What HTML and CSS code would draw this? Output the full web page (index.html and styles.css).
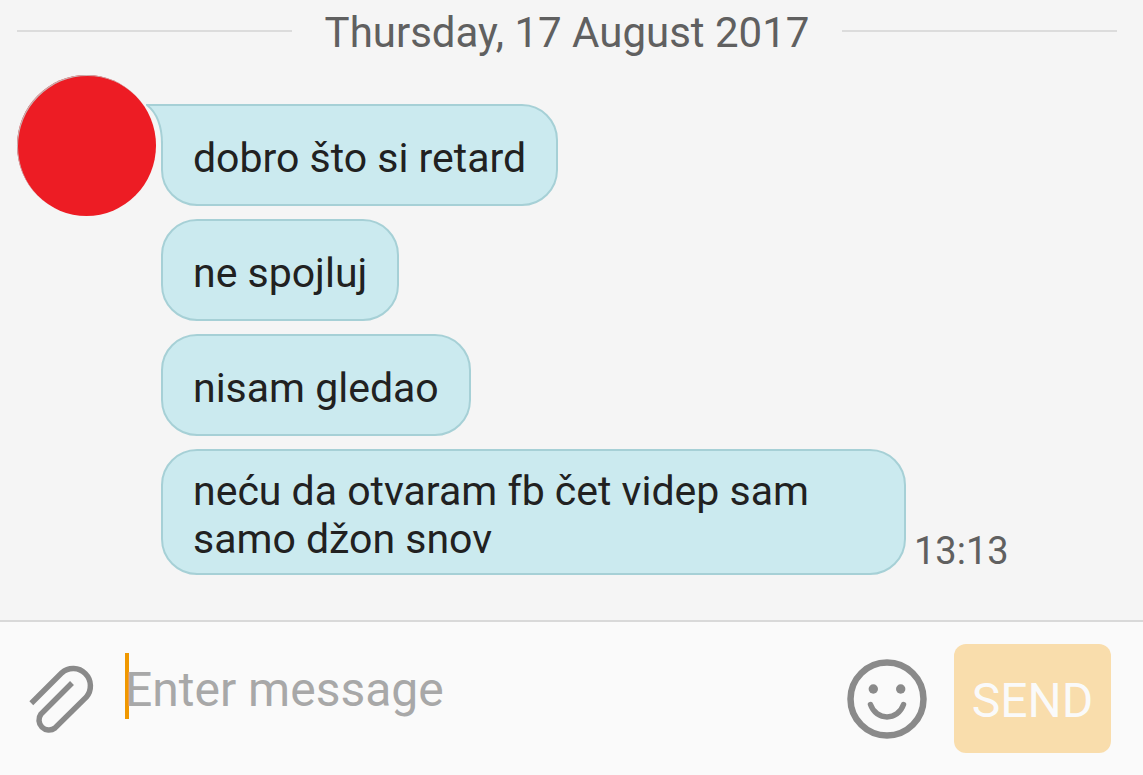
FILE: index.html
```html
<!DOCTYPE html>
<html lang="sr-Latn">

<head>
    <meta charset="UTF-8">
    <meta name="viewport" content="width=device-width, initial-scale=1.0">
    <title>Messages</title>
    <link rel="stylesheet" href="styles.css">
</head>

<body>
    <main class="conversation">
        <h1 class="date">Thursday, 17 August 2017</h1>

        <section class="thread">
            <div class="avatar"></div>
            <div class="messages">
                <div class="message first">
                    <svg class="tail" viewBox="0 0 20 40" aria-hidden="true">
                        <path class="tail-fill" d="M1 1 Q16 13 16 37 L20 40 V1 Z" />
                        <path class="tail-line" d="M20 1 H1 Q16 13 16 40" />
                    </svg>
                    <p class="bubble">dobro što si retard</p>
                </div>
                <div class="message">
                    <p class="bubble">ne spojluj</p>
                </div>
                <div class="message">
                    <p class="bubble">nisam gledao</p>
                </div>
                <div class="message">
                    <p class="bubble">neću da otvaram fb čet videp sam samo džon snov</p>
                    <time class="time">13:13</time>
                </div>
            </div>
        </section>
    </main>

    <form class="composer">
        <button type="button" class="icon-button" aria-label="Attach">
            <svg class="clip" viewBox="0 0 66 70">
                <path d="M2.300 39.300 L32.800 8.800 A17.300 17.300 0 0 1 57.200 33.200 L26 64 A10 10 0 0 1 12 50 L43 19" />
            </svg>
        </button>
        <input type="text" class="message-input" placeholder="Enter message" aria-label="Enter message">
        <button type="button" class="icon-button" aria-label="Emoji">
            <svg class="smiley" viewBox="0 0 80 80">
                <circle class="face" cx="40" cy="40" r="36.5" />
                <circle class="eye" cx="26.3" cy="30" r="4.7" />
                <circle class="eye" cx="53.7" cy="30" r="4.7" />
                <path class="mouth" d="M23.500 45.500 C29 62 51 62 56.500 45.500" />
            </svg>
        </button>
        <button type="button" class="send">SEND</button>
    </form>
</body>

</html>
```
FILE: styles.css
```css
* {
    box-sizing: border-box;
}

body {
    font-family: Roboto, sans-serif;
    margin: 0;
    min-height: 100vh;
    display: flex;
    flex-direction: column;
    background-color: #f5f5f5;
}

.conversation {
    flex: 1;
    padding: 9px 26px 44px 17px;
}

.date {
    display: flex;
    align-items: center;
    gap: 33px;
    margin: 0;
    font-size: 42px;
    line-height: 48px;
    font-weight: 400;
    color: #606060;
}

.date::before,
.date::after {
    content: "";
    flex: 1;
    height: 2px;
    margin-bottom: 4px;
    background-color: #dcdcdc;
}

.thread {
    display: flex;
    margin-top: 18px;
}

.avatar {
    flex: none;
    width: 139px;
    height: 141px;
    margin-right: 5px;
    border-radius: 50%;
    background-color: #ed1c24;
    box-shadow: inset 1px 1px 0 #c9b4b4;
}

.messages {
    flex: 1;
    display: flex;
    flex-direction: column;
    gap: 13px;
    padding-top: 29px;
}

.message {
    position: relative;
    display: flex;
    align-items: flex-end;
    gap: 8px;
}

.bubble {
    display: flex;
    align-items: center;
    max-width: 745px;
    min-height: 102px;
    margin: 0;
    padding: 16px 30px 10px;
    border: 2px solid #a6d0d6;
    border-radius: 36px;
    background-color: #cbeaef;
    color: #212121;
    font-size: 41px;
    line-height: 48px;
}

.first .bubble {
    border-top-left-radius: 0;
}

/* piece of the bubble that reaches behind the avatar */
.tail {
    position: absolute;
    top: 0;
    left: -15px;
    width: 20px;
    height: 40px;
}

.tail-fill {
    fill: #cbeaef;
}

.tail-line {
    fill: none;
    stroke: #a6d0d6;
    stroke-width: 2;
}

.time {
    color: #606060;
    font-size: 38px;
    line-height: 48px;
}

.composer {
    display: flex;
    align-items: center;
    padding: 22px 32px 22px 29px;
    border-top: 2px solid #d9d9d9;
    background-color: #fafafa;
}

.icon-button {
    flex: none;
    padding: 0;
    border: none;
    background: none;
    cursor: pointer;
}

.icon-button svg {
    display: block;
    fill: none;
    stroke: #8a8a8a;
}

.icon-button .clip {
    width: 66px;
    height: 70px;
    stroke-width: 5.5;
}

.icon-button .smiley {
    width: 80px;
    height: 80px;
    stroke-width: 6.5;
}

.smiley .eye {
    fill: #8a8a8a;
    stroke: none;
}

.smiley .mouth {
    stroke-width: 5.5;
    stroke-linecap: round;
}

/* the orange bar is the text cursor */
.message-input {
    flex: 1;
    align-self: flex-start;
    min-width: 0;
    height: 66px;
    margin: 9px 30px 0;
    padding: 6px 0 0;
    border: none;
    outline: none;
    background: linear-gradient(#f09800, #f09800) left / 4px 100% no-repeat;
    color: #212121;
    caret-color: #f09800;
    font-family: inherit;
    font-size: 48px;
}

.message-input::placeholder {
    color: #a8a8a8;
    opacity: 1;
}

.send {
    flex: none;
    width: 157px;
    height: 109px;
    margin-left: 27px;
    padding: 4px 0 0;
    border: none;
    border-radius: 12px;
    background-color: #f9ddac;
    color: #fafafa;
    font-family: inherit;
    font-size: 48px;
    cursor: pointer;
}
```
